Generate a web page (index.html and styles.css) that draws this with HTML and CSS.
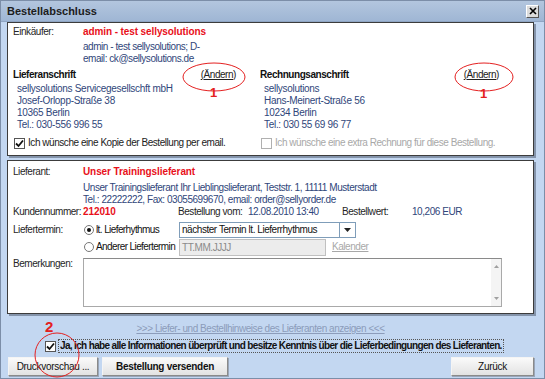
FILE: index.html
```html
<!DOCTYPE html>
<html lang="de">
<head>
    <meta charset="UTF-8">
    <title>Bestellabschluss</title>
    <link rel="stylesheet" href="styles.css">
</head>
<body>
    <div class="window">
        <div class="titlebar">
            <span class="title">Bestellabschluss</span>
            <span class="close">
                <svg width="8" height="8" viewBox="0 0 8 8"><path d="M1 1 L7 7 M7 1 L1 7" stroke="#000" stroke-width="1.6"/></svg>
            </span>
        </div>

        <div class="content">
            <!-- Einkaeufer und Adressen -->
            <div class="panel buyer">
                <div class="row first">
                    <div class="label">Einkäufer:</div>
                    <div class="red">admin - test sellysolutions</div>
                </div>
                <div class="row info">
                    <div class="label"></div>
                    <div class="blue">admin - test sellysolutions; D-<br>email: ck@sellysolutions.de</div>
                </div>

                <div class="addresses">
                    <div class="address">
                        <div class="address-head">
                            <span class="heading">Lieferanschrift</span>
                            <a class="change left-change">(Ändern)</a>
                        </div>
                        <div class="address-lines blue">
                            sellysolutions Servicegesellschft mbH<br>
                            Josef-Orlopp-Straße 38<br>
                            10365 Berlin<br>
                            Tel.: 030-556 996 55
                        </div>
                        <div class="check-line">
                            <span class="checkbox"><svg width="9" height="9" viewBox="0 0 9 9"><path d="M1 4.5 L3.5 7 L8 1.5" fill="none" stroke="#111" stroke-width="1.8"/></svg></span>
                            <span>Ich wünsche eine Kopie der Bestellung per email.</span>
                        </div>
                    </div>
                    <div class="address">
                        <div class="address-head">
                            <span class="heading">Rechnungsanschrift</span>
                            <a class="change right-change">(Ändern)</a>
                        </div>
                        <div class="address-lines blue">
                            sellysolutions<br>
                            Hans-Meinert-Straße 56<br>
                            10234 Berlin<br>
                            Tel.: 030 55 69 96 77
                        </div>
                        <div class="check-line disabled">
                            <span class="checkbox"></span>
                            <span>Ich wünsche eine extra Rechnung für diese Bestellung.</span>
                        </div>
                    </div>
                </div>
            </div>

            <!-- Lieferant -->
            <div class="panel supplier">
                <div class="row first">
                    <div class="label">Lieferant:</div>
                    <div class="red">Unser Trainingslieferant</div>
                </div>
                <div class="row info">
                    <div class="label"></div>
                    <div class="blue">Unser Trainingslieferant Ihr Lieblingslieferant, Teststr. 1, 11111 Musterstadt<br>Tel.: 22222222, Fax: 03055699670, email: order@sellyorder.de</div>
                </div>
                <div class="facts">
                    <div class="label">Kundennummer:</div>
                    <div class="red">212010</div>
                    <div class="label">Bestellung vom:</div>
                    <div class="blue">12.08.2010 13:40</div>
                    <div class="label">Bestellwert:</div>
                    <div class="blue">10,206 EUR</div>
                </div>
                <div class="delivery">
                    <div class="label">Liefertermin:</div>
                    <div class="options">
                        <div class="option">
                            <span class="radio-label"><span class="radio checked"></span>lt. Lieferhythmus</span>
                            <div class="select">
                                <span class="select-text">nächster Termin lt. Lieferrhythmus</span>
                                <span class="select-btn"><svg width="7" height="4" viewBox="0 0 7 4"><path d="M0 0 H7 L3.5 4 Z" fill="#222"/></svg></span>
                            </div>
                        </div>
                        <div class="option">
                            <span class="radio-label"><span class="radio"></span>Anderer Liefertermin</span>
                            <div class="date-input">TT.MM.JJJJ</div>
                            <a class="calendar">Kalender</a>
                        </div>
                    </div>
                </div>
                <div class="remarks">
                    <div class="label">Bemerkungen:</div>
                    <div class="textarea">
                        <div class="scroll">
                            <svg width="5" height="3" viewBox="0 0 5 3"><path d="M0 3 H5 L2.5 0 Z" fill="#a0a0a0"/></svg>
                            <svg width="5" height="3" viewBox="0 0 5 3"><path d="M0 0 H5 L2.5 3 Z" fill="#a0a0a0"/></svg>
                        </div>
                    </div>
                </div>
            </div>

            <div class="hint-row">
                <a class="hint">&gt;&gt;&gt; Liefer- und Bestellhinweise des Lieferanten anzeigen &lt;&lt;&lt;</a>
            </div>

            <div class="confirm">
                <span class="checkbox"><svg width="9" height="9" viewBox="0 0 9 9"><path d="M1 4.5 L3.5 7 L8 1.5" fill="none" stroke="#111" stroke-width="1.8"/></svg></span>
                <span class="confirm-text">Ja, ich habe alle Informationen überprüft und besitze Kenntnis über die Lieferbedingungen des Lieferanten.</span>
            </div>

            <div class="buttons">
                <button class="btn btn-preview">Druckvorschau ...</button>
                <button class="btn btn-send">Bestellung versenden</button>
                <button class="btn btn-back">Zurück</button>
            </div>
        </div>

        <!-- rote Markierungen -->
        <svg class="marks" width="545" height="379" viewBox="0 0 545 379">
            <ellipse cx="214" cy="77" rx="31" ry="14" fill="none" stroke="#e42020" stroke-width="1"/>
            <text x="210" y="97" class="mark-num">1</text>
            <ellipse cx="484" cy="77" rx="29" ry="14" fill="none" stroke="#e42020" stroke-width="1"/>
            <text x="480" y="98" class="mark-num">1</text>
            <circle cx="57" cy="355" r="22" fill="none" stroke="#e42020" stroke-width="1"/>
            <text x="45" y="332" class="mark-num big">2</text>
        </svg>
    </div>
</body>
</html>
```

FILE: styles.css
```css
body {
    margin: 0;
    padding: 0;
    font-family: "Liberation Sans", Arial, sans-serif;
    font-size: 10px;
    letter-spacing: -0.45px;
    color: #222;
}

.window {
    width: 545px;
    height: 379px;
    box-sizing: border-box;
    background: #c3d7f1;
    border: 1px solid #7c8ea8;
    position: relative;
    display: flex;
    flex-direction: column;
}

.titlebar {
    height: 20px;
    flex-shrink: 0;
    background: linear-gradient(#b3c6de, #9fb6d4);
    border-bottom: 1px solid #8fa5c3;
    display: flex;
    align-items: center;
    justify-content: space-between;
    padding: 0 5px 0 6px;
}

.title {
    font-size: 11px;
    letter-spacing: 0;
    font-weight: bold;
    color: #1c1c1c;
}

.close {
    width: 11px;
    height: 11px;
    background: #dcdcdc;
    border: 1px solid;
    border-color: #fff #555 #555 #fff;
    display: flex;
    align-items: center;
    justify-content: center;
}

.content {
    flex: 1;
    padding: 0 10px 0 6px;
    display: flex;
    flex-direction: column;
}

.panel {
    flex-shrink: 0;
    background: #fff;
    border: 1px solid #3c3c3c;
    box-shadow: 2px 2px 0 #8494ab;
    padding: 0 5px;
    line-height: 12px;
}

.buyer {
    height: 132px;
}

.supplier {
    margin-top: 4px;
    height: 152px;
}

.row {
    display: flex;
}

.buyer .first {
    margin-top: 3px;
}

.supplier .first {
    margin-top: 5px;
}

.buyer .info {
    margin-top: 3px;
}

.supplier .info {
    margin-top: 4px;
}

.label {
    width: 70px;
    flex-shrink: 0;
    color: #262626;
}

.red {
    color: #e8101a;
    font-weight: bold;
    font-size: 10px;
    letter-spacing: -0.1px;
}

.blue {
    color: #30467a;
}

.addresses {
    display: grid;
    grid-template-columns: 247px 1fr;
    margin-top: 4px;
}

.address-head {
    display: flex;
}

.heading {
    font-weight: bold;
    color: #111;
}

.change {
    margin-left: auto;
    text-decoration: underline;
    color: #222;
}

.left-change {
    margin-right: 24px;
}

.right-change {
    margin-right: 29px;
}

.address-lines {
    margin-top: 2px;
    padding-left: 4px;
    letter-spacing: -0.3px;
}

.check-line {
    display: flex;
    align-items: center;
    margin-top: 6px;
    padding-left: 1px;
}

.check-line.disabled {
    color: #a8a8a8;
}

.checkbox {
    width: 9px;
    height: 9px;
    border: 1px solid #555;
    background: #fff;
    margin-right: 3px;
    display: flex;
    align-items: center;
    justify-content: center;
}

.disabled .checkbox {
    border-color: #b0b0b0;
}

.facts {
    display: grid;
    grid-template-columns: 70px 95px 70px 94px 70px auto;
}

.delivery {
    display: flex;
    margin-top: 4px;
}

.delivery .label {
    line-height: 16px;
}

.options {
    display: flex;
    flex-direction: column;
    gap: 1px;
}

.option {
    display: flex;
    align-items: center;
    height: 16px;
}

.radio-label {
    width: 96px;
    flex-shrink: 0;
    white-space: nowrap;
    letter-spacing: -0.6px;
    display: flex;
    align-items: center;
    color: #111;
}

.radio {
    width: 8px;
    height: 8px;
    flex-shrink: 0;
    border: 1px solid #777;
    border-radius: 50%;
    margin: 0 2px 0 1px;
    position: relative;
    background: #fff;
}

.radio.checked::after {
    content: '';
    position: absolute;
    left: 2px;
    top: 2px;
    width: 4px;
    height: 4px;
    border-radius: 50%;
    background: #111;
}

.select {
    width: 177px;
    height: 16px;
    box-sizing: border-box;
    border: 1px solid #7f9db9;
    display: flex;
    align-items: center;
}

.select-text {
    flex: 1;
    padding-left: 2px;
    color: #111;
}

.select-btn {
    width: 15px;
    height: 14px;
    border-left: 1px solid #7f9db9;
    display: flex;
    align-items: center;
    justify-content: center;
}

.date-input {
    width: 147px;
    height: 17px;
    box-sizing: border-box;
    border: 1px solid #c0c0c0;
    background: #ececec;
    color: #8a8a8a;
    padding: 1px 2px;
    line-height: 13px;
}

.calendar {
    margin-left: 6px;
    color: #a8a8a8;
    text-decoration: underline;
}

.remarks {
    display: flex;
    margin-top: 3px;
}

.textarea {
    width: 419px;
    height: 49px;
    box-sizing: border-box;
    border: 1px solid #a9a9a9;
    border-top-color: #8a8a8a;
    display: flex;
    justify-content: flex-end;
}

.scroll {
    width: 10px;
    background: #f4f4f4;
    display: flex;
    flex-direction: column;
    justify-content: space-between;
    align-items: center;
    padding: 6px 0;
}

.hint-row {
    margin-top: 9px;
    text-align: center;
    padding-right: 20px;
    line-height: 12px;
}

.hint {
    color: #8c9cba;
    text-decoration: underline;
}

.confirm {
    display: flex;
    align-items: center;
    margin-top: 4px;
    padding-left: 38px;
    line-height: 12px;
}

.confirm .checkbox {
    margin-right: 2px;
}

.confirm-text {
    font-weight: bold;
    color: #111;
    letter-spacing: -0.65px;
    border: 1px dotted #555;
    padding: 0 1px;
}

.buttons {
    display: flex;
    gap: 4px;
    margin-top: 4px;
    padding-left: 1px;
}

.btn {
    height: 19px;
    font-family: "Liberation Sans", Arial, sans-serif;
    font-size: 10px;
    letter-spacing: -0.3px;
    color: #111;
    background: linear-gradient(#fafafa, #e2e2e2);
    border: 1px solid;
    border-color: #f4f4f4 #8a8a8a #8a8a8a #f4f4f4;
    box-shadow: 1px 1px 0 #9aa6b8;
    padding: 0;
}

.btn-preview {
    width: 90px;
}

.btn-send {
    width: 126px;
    font-weight: bold;
}

.btn-back {
    width: 83px;
    margin-left: auto;
}

.marks {
    position: absolute;
    left: -1px;
    top: -1px;
    pointer-events: none;
}

.mark-num {
    fill: #e42020;
    font-family: "Liberation Sans", Arial, sans-serif;
    font-size: 13px;
    font-weight: bold;
    letter-spacing: 0;
}

.mark-num.big {
    font-size: 15px;
}
```
